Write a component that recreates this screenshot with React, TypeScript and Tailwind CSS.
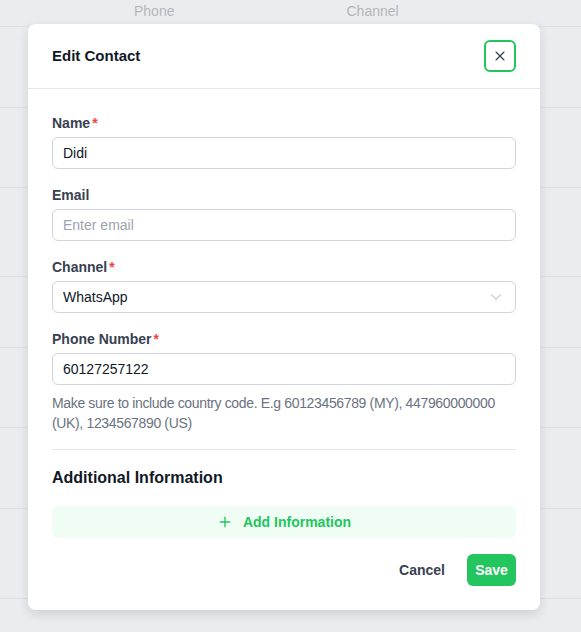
import { X, ChevronDown, Plus } from 'lucide-react'

const font = { fontFamily: '"Segoe UI", "Liberation Sans", Arial, sans-serif' }

function Label({ text, required }: { text: string; required?: boolean }) {
  return (
    <label className="block text-sm font-semibold text-[#374151] mb-1 leading-5">
      {text}
      {required && <span className="text-[#ef4444] ml-0.5">*</span>}
    </label>
  )
}

const inputCls =
  'w-full h-8 px-[10px] text-sm text-[#111827] border border-[#d1d5db] rounded-md bg-white outline-none placeholder:text-[#9ca3af]'

export default function App() {
  const rows = [27, 108, 188, 277, 348, 428, 509, 599]
  return (
    <div className="relative w-[581px] h-[632px] overflow-hidden bg-[#ebecf0]" style={font}>
      {/* background table */}
      <div className="absolute inset-0">
        <div className="flex h-[27px] items-start text-sm text-[#b4b6bc] border-b border-[#dfe0e4]">
          <span className="ml-[134px] mt-px">Phone</span>
          <span className="ml-[172px] mt-px">Channel</span>
        </div>
        {rows.slice(1).map((y, i) => (
          <div
            key={y}
            className="border-b border-[#dfe0e4]"
            style={{ height: y - rows[i] }}
          />
        ))}
      </div>

      {/* modal */}
      <div className="absolute left-[28px] top-[24px] w-[512px] bg-white rounded-lg shadow-[0_4px_12px_rgba(0,0,0,0.12)]">
        <div className="flex items-center justify-between px-6 py-4 border-b border-[#e5e7eb]">
          <h2 className="text-[15px] font-semibold text-[#111827]">Edit Contact</h2>
          <button className="w-8 h-8 flex items-center justify-center border-2 border-[#22c55e] rounded-md text-[#374151]">
            <X className="w-4 h-4" strokeWidth={1.75} />
          </button>
        </div>

        <div className="px-6 pt-6 pb-6">
          <div className="space-y-4">
            <div>
              <Label text="Name" required />
              <input className={inputCls} defaultValue="Didi" />
            </div>
            <div>
              <Label text="Email" />
              <input className={inputCls} placeholder="Enter email" />
            </div>
            <div>
              <Label text="Channel" required />
              <div className={inputCls + ' flex items-center justify-between'}>
                <span>WhatsApp</span>
                <ChevronDown className="w-[18px] h-[18px] text-[#9ca3af]" strokeWidth={1.25} />
              </div>
            </div>
            <div>
              <Label text="Phone Number" required />
              <input className={inputCls} defaultValue="60127257122" />
              <p className="mt-2 text-sm leading-5 tracking-[-0.35px] text-[#6b7280]">
                Make sure to include country code. E.g 60123456789 (MY), 447960000000 (UK), 1234567890 (US)
              </p>
            </div>
          </div>

          <div className="border-t border-[#e5e7eb] mt-4" />

          <h3 className="mt-4 text-base leading-6 font-semibold text-[#111827]">Additional Information</h3>

          <button className="mt-4 w-full h-8 flex items-center justify-center gap-2.5 rounded-md bg-[#f0fdf4] text-[#22c55e] text-sm font-semibold">
            <Plus className="w-4 h-4" strokeWidth={2} />
            Add Information
          </button>

          <div className="mt-4 flex justify-end items-center gap-1.5">
            <button className="px-4 h-8 text-sm font-semibold text-[#374151]">Cancel</button>
            <button className="w-[49px] h-8 text-sm font-semibold text-white bg-[#22c55e] rounded-md">Save</button>
          </div>
        </div>
      </div>
    </div>
  )
}
